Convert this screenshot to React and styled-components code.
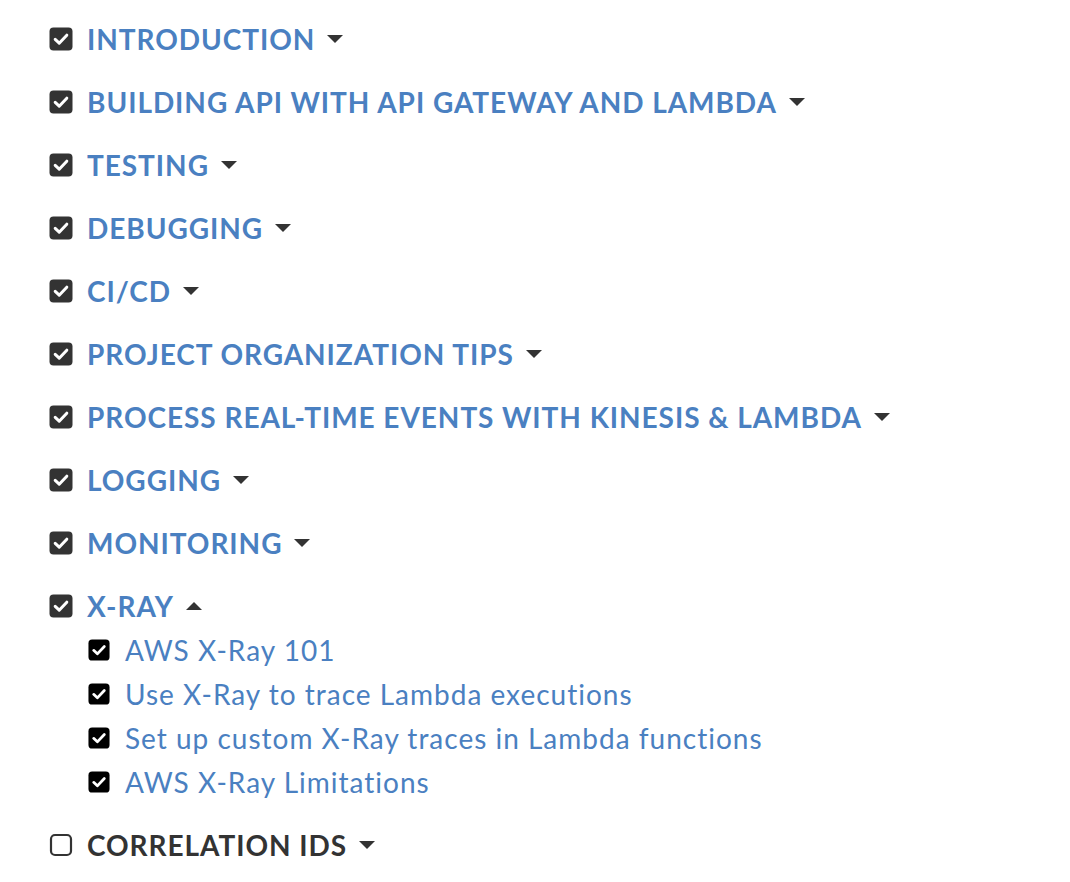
import React from "react";
import styled, { createGlobalStyle } from "styled-components";

const GlobalStyle = createGlobalStyle`
	body {
		margin: 0;
		background: #fff;
		font-family: Lato, "Liberation Sans", sans-serif;
	}
`;

const Page = styled.div`
	padding: 16px 0 0 49px;
`;

const Section = styled.section`
	margin-bottom: 18px;
`;

const Header = styled.div`
	display: flex;
	align-items: center;
	height: 45px;
	gap: 14px;
`;

const Title = styled.span`
	font-size: 28px;
	font-weight: 700;
	letter-spacing: 0.95px;
	color: ${(p) => (p.$done ? "#4a80c1" : "#333")};
`;

const Caret = styled.span`
	margin-left: -2px;
	display: inline-flex;
	color: #333;
`;

const SubList = styled.ul`
	list-style: none;
	margin: 0;
	padding: 0 0 0 39px;
`;

const SubItem = styled.li`
	display: flex;
	align-items: center;
	height: 44px;
	gap: 15px;
`;

const SubTitle = styled.span`
	font-size: 28px;
	letter-spacing: 1px;
	color: #4a80c1;
`;

function CheckBox({ checked, size, color }) {
	if (!checked) {
		return (
			<svg width={size} height={size} viewBox="0 0 24 24">
				<rect x="2" y="2" width="20" height="20" rx="4" fill="none" stroke={color} strokeWidth="2.2" />
			</svg>
		);
	}
	return (
		<svg width={size} height={size} viewBox="0 0 24 24">
			<rect x="0.5" y="0.5" width="23" height="23" rx="4" fill={color} />
			<path d="M6.2 12.4 L10.2 16.2 L17.8 8.2" fill="none" stroke="#fff" strokeWidth="3" strokeLinecap="round" strokeLinejoin="round" />
		</svg>
	);
}

function CaretIcon({ up }) {
	return (
		<Caret>
			<svg width="16" height="8" viewBox="0 0 16 8">
				{up ? <path d="M0 8 L8 0 L16 8 Z" fill="currentColor" /> : <path d="M0 0 L16 0 L8 8 Z" fill="currentColor" />}
			</svg>
		</Caret>
	);
}

const sections = [
	{ title: "INTRODUCTION", done: true },
	{ title: "BUILDING API WITH API GATEWAY AND LAMBDA", done: true },
	{ title: "TESTING", done: true },
	{ title: "DEBUGGING", done: true },
	{ title: "CI/CD", done: true },
	{ title: "PROJECT ORGANIZATION TIPS", done: true },
	{ title: "PROCESS REAL-TIME EVENTS WITH KINESIS & LAMBDA", done: true },
	{ title: "LOGGING", done: true },
	{ title: "MONITORING", done: true },
	{
		title: "X-RAY",
		done: true,
		open: true,
		items: [
			"AWS X-Ray 101",
			"Use X-Ray to trace Lambda executions",
			"Set up custom X-Ray traces in Lambda functions",
			"AWS X-Ray Limitations",
		],
	},
	{ title: "CORRELATION IDS", done: false },
];

export default function App() {
	return (
		<Page>
			<GlobalStyle />
			{sections.map((s) => (
				<Section key={s.title}>
					<Header>
						<CheckBox checked={s.done} size={24} color="#333" />
						<Title $done={s.done}>{s.title}</Title>
						<CaretIcon up={s.open} />
					</Header>
					{s.open && (
						<SubList>
							{s.items.map((it) => (
								<SubItem key={it}>
									<CheckBox checked size={22} color="#000" />
									<SubTitle>{it}</SubTitle>
								</SubItem>
							))}
						</SubList>
					)}
				</Section>
			))}
		</Page>
	);
}
